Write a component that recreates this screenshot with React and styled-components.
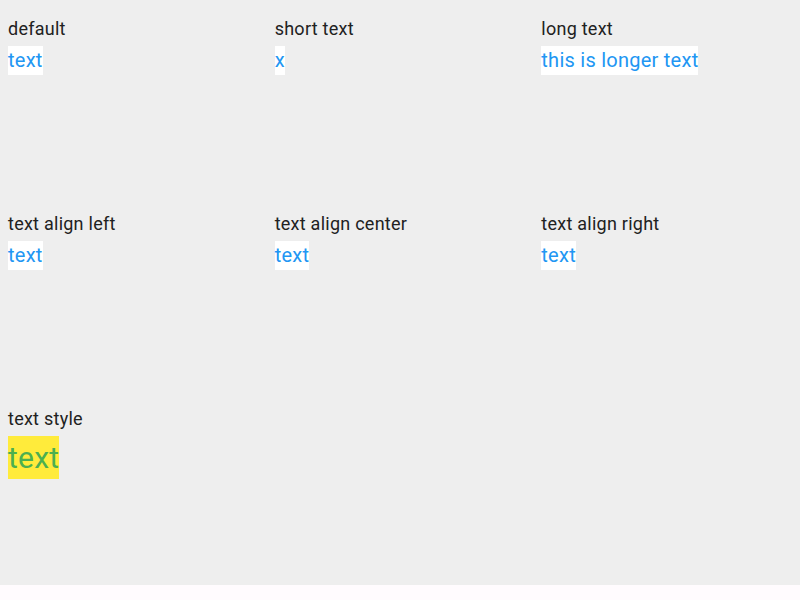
import React from "react";
import styled, { createGlobalStyle } from "styled-components";

const Global = createGlobalStyle`
  body {
    margin: 0;
    background: #fffbfe;
    font-family: Roboto, "Noto Sans", sans-serif;
  }
`;

const Grid = styled.div`
  display: grid;
  grid-template-columns: repeat(3, 1fr);
  grid-template-rows: repeat(3, 195px);
  background: #eeeeee;
  width: 800px;
`;

const Cell = styled.div`
  padding: 16px 8px 0 8px;
  display: flex;
  flex-direction: column;
  align-items: flex-start;
`;

const Label = styled.div`
  font-size: 18px;
  line-height: 26px;
  letter-spacing: 0.25px;
  color: #212121;
  margin-bottom: 4px;
`;

const Sample = styled.span`
  display: inline-block;
  background: ${(p) => (p.$styled ? "#ffeb3b" : "#ffffff")};
  color: ${(p) => (p.$styled ? "#4caf50" : "#2196f3")};
  font-size: ${(p) => (p.$styled ? "30px" : "20px")};
  line-height: ${(p) => (p.$styled ? "43px" : "29px")};
  letter-spacing: 0.25px;
`;

const items = [
  { label: "default", text: "text" },
  { label: "short text", text: "x" },
  { label: "long text", text: "this is longer text" },
  { label: "text align left", text: "text" },
  { label: "text align center", text: "text" },
  { label: "text align right", text: "text" },
  { label: "text style", text: "text", styled: true },
];

export default function App() {
  return (
    <>
      <Global />
      <Grid>
        {items.map((it) => (
          <Cell key={it.label}>
            <Label>{it.label}</Label>
            <Sample $styled={it.styled}>{it.text}</Sample>
          </Cell>
        ))}
      </Grid>
    </>
  );
}
